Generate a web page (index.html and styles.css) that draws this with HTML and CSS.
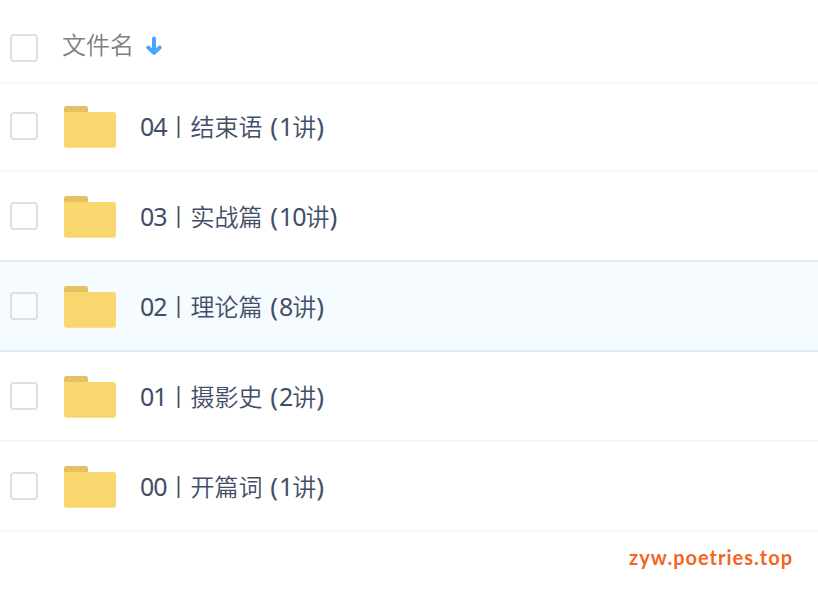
FILE: index.html
```html
<!DOCTYPE html>
<html lang="zh-CN">
<head>
    <meta charset="utf-8">
    <title>文件列表</title>
    <link rel="stylesheet" href="styles.css">
</head>
<body>

<svg class="sprite">
    <symbol id="folder" viewBox="0 0 52 43">
        <path d="M0 10V3.5Q0 1 2.5 1H21.5Q24 1 24 3.5V10Z" fill="#e5c162"/>
        <path d="M0 7H49.5Q52 7 52 9.5V40.3Q52 42.8 49.5 42.8H2.5Q0 42.8 0 40.3Z" fill="#f9d66e"/>
    </symbol>
</svg>

<div class="list-head">
    <span class="checkbox"></span>
    <span class="head-name">文件名</span>
    <svg class="sort-arrow" viewBox="0 0 16 20">
        <path d="M8 2.5V16.5M2.3 11.5L8 16.8L13.7 11.5" fill="none" stroke="#46a6fb" stroke-width="4" stroke-linecap="round" stroke-linejoin="round"/>
    </svg>
</div>

<ul class="file-list">
    <li class="file">
        <span class="checkbox"></span>
        <svg class="folder"><use href="#folder"/></svg>
        <span class="name"><span class="num">04</span>丨结束语<span class="paren"> (</span><span class="num">1</span>讲<span class="paren">)</span></span>
    </li>
    <li class="file">
        <span class="checkbox"></span>
        <svg class="folder"><use href="#folder"/></svg>
        <span class="name"><span class="num">03</span>丨实战篇<span class="paren"> (</span><span class="num">10</span>讲<span class="paren">)</span></span>
    </li>
    <li class="file active">
        <span class="checkbox"></span>
        <svg class="folder"><use href="#folder"/></svg>
        <span class="name"><span class="num">02</span>丨理论篇<span class="paren"> (</span><span class="num">8</span>讲<span class="paren">)</span></span>
    </li>
    <li class="file">
        <span class="checkbox"></span>
        <svg class="folder"><use href="#folder"/></svg>
        <span class="name"><span class="num">01</span>丨摄影史<span class="paren"> (</span><span class="num">2</span>讲<span class="paren">)</span></span>
    </li>
    <li class="file">
        <span class="checkbox"></span>
        <svg class="folder"><use href="#folder"/></svg>
        <span class="name"><span class="num">00</span>丨开篇词<span class="paren"> (</span><span class="num">1</span>讲<span class="paren">)</span></span>
    </li>
</ul>

<div class="site">zyw.poetries.top</div>

</body>
</html>
```

FILE: styles.css
```css
* {
    box-sizing: border-box;
}

body {
    margin: 0;
    height: 594px;
    overflow: hidden;
    background: #fff;
    color: #424e67;
    font-family: "Noto Sans", "Noto Sans CJK SC", sans-serif;
    font-size: 24px;
}

.sprite {
    display: none;
}

.list-head {
    display: flex;
    height: 84px;
    padding: 34px 0 0 10px;
    border-bottom: 2px solid #f2f6fd;
}

.checkbox {
    flex: none;
    width: 28px;
    height: 28px;
    border: 2px solid #d9e0e9;
    border-radius: 4px;
    background: #fff;
}

.head-name {
    margin: -8px 0 0 24px;
    height: 36px;
    line-height: 36px;
    color: #808080;
    font-family: "Noto Sans CJK SC", sans-serif;
    font-weight: 350;
}

.sort-arrow {
    width: 16px;
    height: 20px;
    margin: 2px 0 0 12px;
}

.file-list {
    margin: 0;
    padding: 0;
    list-style: none;
}

.file {
    display: flex;
    align-items: flex-end;
    height: 90px;
    padding: 0 0 22px 10px;
    border-bottom: 2px solid #f2f6fd;
}

.file:first-child {
    height: 88px;
}

.file .checkbox {
    margin-bottom: 8px;
}

/* the top line of the active row covers the one of the row above */
.file.active {
    height: 92px;
    margin-top: -2px;
    border-top: 2px solid #deebfb;
    border-bottom-color: #deebfb;
    background: #f6fbff;
}

.active .checkbox {
    background: #f8fcff;
}

.folder {
    width: 52px;
    height: 43px;
    margin-left: 26px;
}

.name {
    height: 36px;
    margin: 0 0 4px 24px;
    line-height: 36px;
    white-space: pre;
    font-family: "Noto Sans CJK SC", sans-serif;
    font-weight: 350;
}

.num,
.paren {
    font-family: "Noto Sans", sans-serif;
    font-size: 25px;
    font-weight: 400;
    line-height: 1;
    letter-spacing: -1.1px;
}

.paren {
    font-size: 26px;
    letter-spacing: 1px;
}

.site {
    padding: 12px 25px 0 0;
    line-height: 26px;
    text-align: right;
    color: #f26522;
    font-family: Lato, sans-serif;
    font-size: 20px;
    font-weight: 700;
    letter-spacing: 1px;
}
```
